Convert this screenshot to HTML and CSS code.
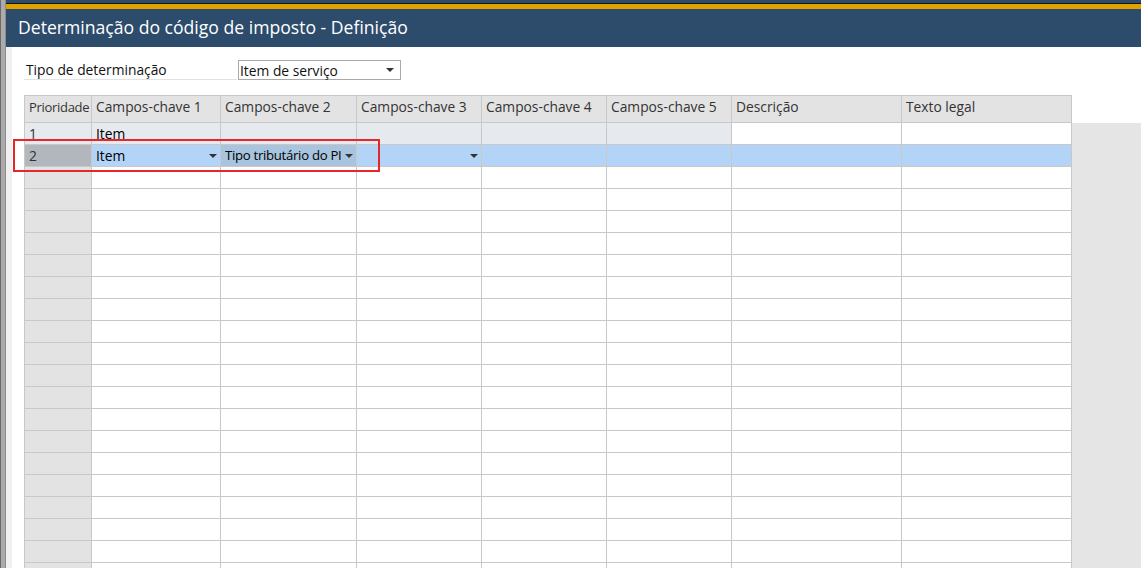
FILE: index.html
```html
<!DOCTYPE html>
<html lang="pt">
<head>
<meta charset="utf-8">
<title>Determinação do código de imposto - Definição</title>
<link rel="stylesheet" href="styles.css">
</head>
<body>
<div class="frame">
  <div class="edge"></div>
  <div class="window">
    <div class="topline"></div>
    <div class="accent"></div>
    <div class="titlebar"><span class="title">Determinação do código de imposto - Definição</span></div>
    <div class="body">
      <div class="gutter"></div>
      <div class="content">
        <div class="form-row">
          <div class="label">Tipo de determinação</div>
          <div class="select"><span>Item de serviço</span><i class="arrow"></i></div>
        </div>
        <div class="table-area">
          <div class="grid">
            <div class="h tight">Prioridade</div>
            <div class="h">Campos-chave 1</div>
            <div class="h">Campos-chave 2</div>
            <div class="h">Campos-chave 3</div>
            <div class="h">Campos-chave 4</div>
            <div class="h">Campos-chave 5</div>
            <div class="h">Descrição</div>
            <div class="h">Texto legal</div>

            <div class="c r1 p">1</div>
            <div class="c r1 v">Item</div>
            <div class="c r1"></div>
            <div class="c r1"></div>
            <div class="c r1"></div>
            <div class="c r1"></div>
            <div class="c"></div>
            <div class="c"></div>

            <div class="c r2p p">2</div>
            <div class="c r2 v dd"><span class="t">Item</span><i class="arrow"></i></div>
            <div class="c r2 sel v dd"><span class="t squeeze">Tipo tributário do PI</span><i class="arrow"></i></div>
            <div class="c r2 dd"><span class="t"></span><i class="arrow"></i></div>
            <div class="c r2"></div>
            <div class="c r2"></div>
            <div class="c r2"></div>
            <div class="c r2"></div>
          </div>
          <div class="grid empty" id="empty"></div>
          <div class="mark"></div>
        </div>
      </div>
      <div class="filler"></div>
    </div>
  </div>
</div>
<script>
  var g = document.getElementById('empty');
  var html = '';
  for (var i = 0; i < 19; i++) {
    html += '<div class="c p"></div>';
    for (var j = 0; j < 7; j++) html += '<div class="c"></div>';
  }
  g.innerHTML = html;
</script>
</body>
</html>
```

FILE: styles.css
```css
html, body {
  margin: 0;
  padding: 0;
  background: #ffffff;
}
body {
  font-family: "Open Sans", "Noto Sans", sans-serif;
  color: #222;
  overflow: hidden;
}
.frame {
  display: flex;
  width: 1141px;
  height: 568px;
  overflow: hidden;
}
.edge {
  width: 6px;
  flex: none;
  background: linear-gradient(to right, #6a6a6a 0 1px, #ababab 1px 5px, #8c8c8c 5px 6px);
}
.window {
  flex: 1;
  display: flex;
  flex-direction: column;
  min-width: 0;
}
.topline {
  height: 3px;
  background: #2d4c6c;
  border-bottom: 1px solid #151515;
}
.accent {
  height: 5px;
  background: #e3a100;
}
.titlebar {
  height: 38px;
  background: #2d4c6c;
  display: flex;
  align-items: center;
  padding-left: 12px;
}
.title {
  color: #ffffff;
  font-size: 17.6px;
  position: relative;
  top: -1px;
}
.body {
  flex: 1;
  display: flex;
  min-height: 0;
}
.gutter {
  width: 6px;
  flex: none;
  background: #f0f0f0;
}
.content {
  flex: none;
  width: 1048px;
  padding-left: 12px;
  padding-top: 13px;
  font-size: 13.8px;
}
.filler {
  flex: 1;
  margin-top: 76px;
  background: #e5e5e5;
}
.form-row {
  display: flex;
  height: 20px;
  align-items: stretch;
}
.label {
  width: 211px;
  padding-left: 2px;
  border-bottom: 1px solid #e2e2e2;
  line-height: 20px;
  color: #111;
}
.select {
  margin-left: 1px;
  width: 163px;
  box-sizing: border-box;
  border: 1px solid #a9a9a9;
  display: flex;
  align-items: center;
  justify-content: space-between;
  padding: 0 6px 0 1px;
  color: #111;
}
.arrow {
  display: block;
  flex: none;
  width: 0;
  height: 0;
  border-left: 4px solid transparent;
  border-right: 4px solid transparent;
  border-top: 4px solid #333;
}
.table-area {
  position: relative;
  margin-top: 15px;
}
.grid {
  display: grid;
  grid-template-columns: 67px 129px 136px 125px 125px 125px 170px 170px;
  border-left: 1px solid #c8c8c8;
}
.h {
  height: 28px;
  box-sizing: border-box;
  background: #e3e3e3;
  border-top: 1px solid #c8c8c8;
  border-right: 1px solid #c8c8c8;
  border-bottom: 1px solid #c8c8c8;
  padding: 0 4px;
  line-height: 22px;
  color: #333;
  white-space: nowrap;
  overflow: hidden;
}
.h.tight {
  padding: 0 0 0 4px;
  font-size: 13px;
  letter-spacing: -0.3px;
}
.c {
  height: 22px;
  box-sizing: border-box;
  border-right: 1px solid #c8c8c8;
  border-bottom: 1px solid #c8c8c8;
  padding: 0 4px;
  line-height: 21px;
  background: #ffffff;
  color: #222;
  white-space: nowrap;
  overflow: hidden;
}
.c.p {
  background: #e3e3e3;
  color: #333;
}
.c.r1 {
  background: #e6eaee;
}
.c.r1.p {
  background: #e6eaee;
}
.c.r2 {
  background: #b3d4f7;
}
.c.r2p {
  background: #b1b7bd;
  color: #333;
}
.c.r2.sel {
  background: #a8c4de;
}
.v {
  color: #000;
}
.dd {
  display: flex;
  align-items: center;
  justify-content: space-between;
  padding-right: 3px;
}
.dd .t {
  overflow: hidden;
  white-space: nowrap;
}
.dd .t.squeeze {
  font-size: 13.2px;
  letter-spacing: -0.3px;
}
.mark {
  position: absolute;
  left: -11px;
  top: 44px;
  width: 367px;
  height: 33px;
  box-sizing: border-box;
  border: 2px solid #e5262b;
  pointer-events: none;
}
```
